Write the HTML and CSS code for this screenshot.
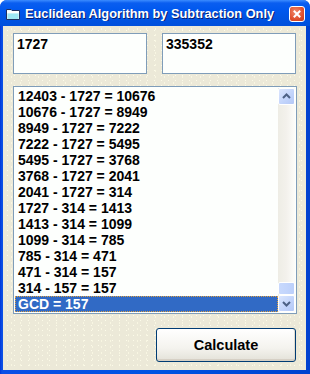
FILE: index.html
```html
<!DOCTYPE html>
<html>
<head>
    <title>Euclidean Algorithm by Subtraction Only</title>
    <link rel="stylesheet" href="styles.css">
</head>
<body>
    <div class="window">
        <div class="titlebar">
            <svg class="app-icon" width="16" height="16" viewBox="0 0 16 16">
                <path d="M1.5 3.5 H6 L7 4.5 H14.5 V13.5 H1.5 Z" fill="#e8fbff" stroke="#203060"/>
                <rect x="2" y="5" width="12" height="2" fill="#ffffff"/>
                <rect x="2.5" y="7.5" width="11" height="5.5" fill="#9fe8f4"/>
            </svg>
            <span class="title">Euclidean Algorithm by Subtraction Only</span>
            <div class="close">
                <svg width="14" height="14" viewBox="0 0 14 14">
                    <path d="M4.5 4.5 L9.5 9.5 M9.5 4.5 L4.5 9.5" stroke="#fff" stroke-width="2" stroke-linecap="square"/>
                </svg>
            </div>
        </div>

        <div class="client">
            <div class="inputs">
                <div class="textbox">1727</div>
                <div class="textbox">335352</div>
            </div>

            <div class="listbox">
                <ul class="items">
                    <li>12403 - 1727 = 10676</li>
                    <li>10676 - 1727 = 8949</li>
                    <li>8949 - 1727 = 7222</li>
                    <li>7222 - 1727 = 5495</li>
                    <li>5495 - 1727 = 3768</li>
                    <li>3768 - 1727 = 2041</li>
                    <li>2041 - 1727 = 314</li>
                    <li>1727 - 314 = 1413</li>
                    <li>1413 - 314 = 1099</li>
                    <li>1099 - 314 = 785</li>
                    <li>785 - 314 = 471</li>
                    <li>471 - 314 = 157</li>
                    <li>314 - 157 = 157</li>
                    <li class="selected">GCD = 157</li>
                </ul>
                <div class="scrollbar">
                    <div class="sb-btn">
                        <svg width="15" height="15" viewBox="0 0 15 15">
                            <path d="M4 9 L7.5 5.5 L11 9" fill="none" stroke="#4d6185" stroke-width="2"/>
                        </svg>
                    </div>
                    <div class="sb-track"></div>
                    <div class="sb-thumb"></div>
                    <div class="sb-btn">
                        <svg width="15" height="15" viewBox="0 0 15 15">
                            <path d="M4 6 L7.5 9.5 L11 6" fill="none" stroke="#4d6185" stroke-width="2"/>
                        </svg>
                    </div>
                </div>
            </div>

            <div class="actions">
                <button class="calc">Calculate</button>
            </div>
        </div>
    </div>
</body>
</html>
```

FILE: styles.css
```css
body {
    margin: 0;
    background-color: #fff;
}
.window {
    width: 310px;
    height: 374px;
    box-sizing: border-box;
    display: flex;
    flex-direction: column;
    background: linear-gradient(to right, #0036d8, #0a4fe6 2px, #0054e3 50%, #0041cf);
    border-radius: 7px 7px 0 0;
    padding: 0 4px 4px 3px;
}
.titlebar {
    height: 26px;
    display: flex;
    align-items: center;
    background: linear-gradient(to bottom, #3c8cff 0, #0a5ef0 3px, #0058ee 10px, #0054e3 18px, #0050dc 26px);
    margin: 0 -4px 0 -3px;
    padding: 0 5px 0 5px;
    border-radius: 7px 7px 0 0;
}
.app-icon {
    flex: none;
    margin-top: 1px;
}
.title {
    flex: 1;
    min-width: 0;
    margin-left: 4px;
    color: #fff;
    font-family: "Liberation Sans", Arial, sans-serif;
    font-weight: bold;
    font-size: 12.8px;
    text-shadow: 1px 1px 0 #0a1e6e;
    white-space: nowrap;
    overflow: hidden;
}
.close {
    flex: none;
    width: 16px;
    height: 16px;
    box-sizing: border-box;
    border: 1px solid #fff;
    border-radius: 3px;
    background: radial-gradient(circle at 40% 35%, #f08a6c, #e0502e 60%, #c23a1a);
    display: flex;
    align-items: center;
    justify-content: center;
    margin-top: 1px;
}
.client {
    flex: 1;
    background-color: #ece9d8;
    background-image:
        radial-gradient(circle, #fcfbe9 0.7px, transparent 1px),
        radial-gradient(circle, #f8f6e2 0.7px, transparent 1px);
    background-size: 7px 5px, 9px 6px;
    background-position: 1px 2px, 4px 0;
    padding: 7px 10px 0 10px;
    font-family: "Liberation Sans", Arial, sans-serif;
}
.inputs {
    display: flex;
    gap: 15px;
}
.textbox {
    width: 135px;
    height: 41px;
    box-sizing: border-box;
    border: 1px solid #7f9db9;
    background: #fdfffd;
    font-weight: bold;
    font-size: 14px;
    padding: 2px 3px;
    line-height: 16px;
}
.listbox {
    margin-top: 12px;
    width: 284px;
    height: 228px;
    box-sizing: border-box;
    border: 1px solid #7f9db9;
    background: #fdfffd;
    display: flex;
    padding: 1px;
}
.items {
    list-style: none;
    margin: 0;
    padding: 0;
    flex: 1;
}
.items li {
    height: 16px;
    line-height: 16px;
    font-size: 14px;
    font-weight: bold;
    padding-left: 3px;
    box-sizing: border-box;
}
.items li.selected {
    background: #316ac5;
    color: #fff;
    outline: 1px dotted #e0a040;
    outline-offset: -1px;
}
.scrollbar {
    width: 17px;
    display: flex;
    flex-direction: column;
    background: linear-gradient(to right, #eeede5, #f3f1ec 50%, #fdfdfa);
}
.sb-btn {
    height: 17px;
    box-sizing: border-box;
    border: 1px solid #fff;
    border-radius: 2px;
    background: linear-gradient(135deg, #dbe6fd, #c1d3fb 60%, #b4c8f6);
    display: flex;
    align-items: center;
    justify-content: center;
}
.sb-track {
    flex: 1;
}
.sb-thumb {
    height: 13px;
    box-sizing: border-box;
    border: 1px solid #fff;
    border-radius: 2px;
    background: linear-gradient(to right, #c8d9fd, #bcd0fb);
}
.actions {
    display: flex;
    justify-content: flex-end;
    margin-top: 14px;
}
.calc {
    width: 140px;
    height: 34px;
    border: 1px solid #003c74;
    border-radius: 3px;
    background: linear-gradient(to bottom, #ffffff, #f4f3ee 60%, #e3e1d8);
    box-shadow: inset 0 -2px 0 #d6d0c5, inset -1px 0 0 #e0dcd0;
    font-family: "Liberation Sans", Arial, sans-serif;
    font-weight: bold;
    font-size: 14.5px;
    color: #000;
    padding: 0;
}
```
